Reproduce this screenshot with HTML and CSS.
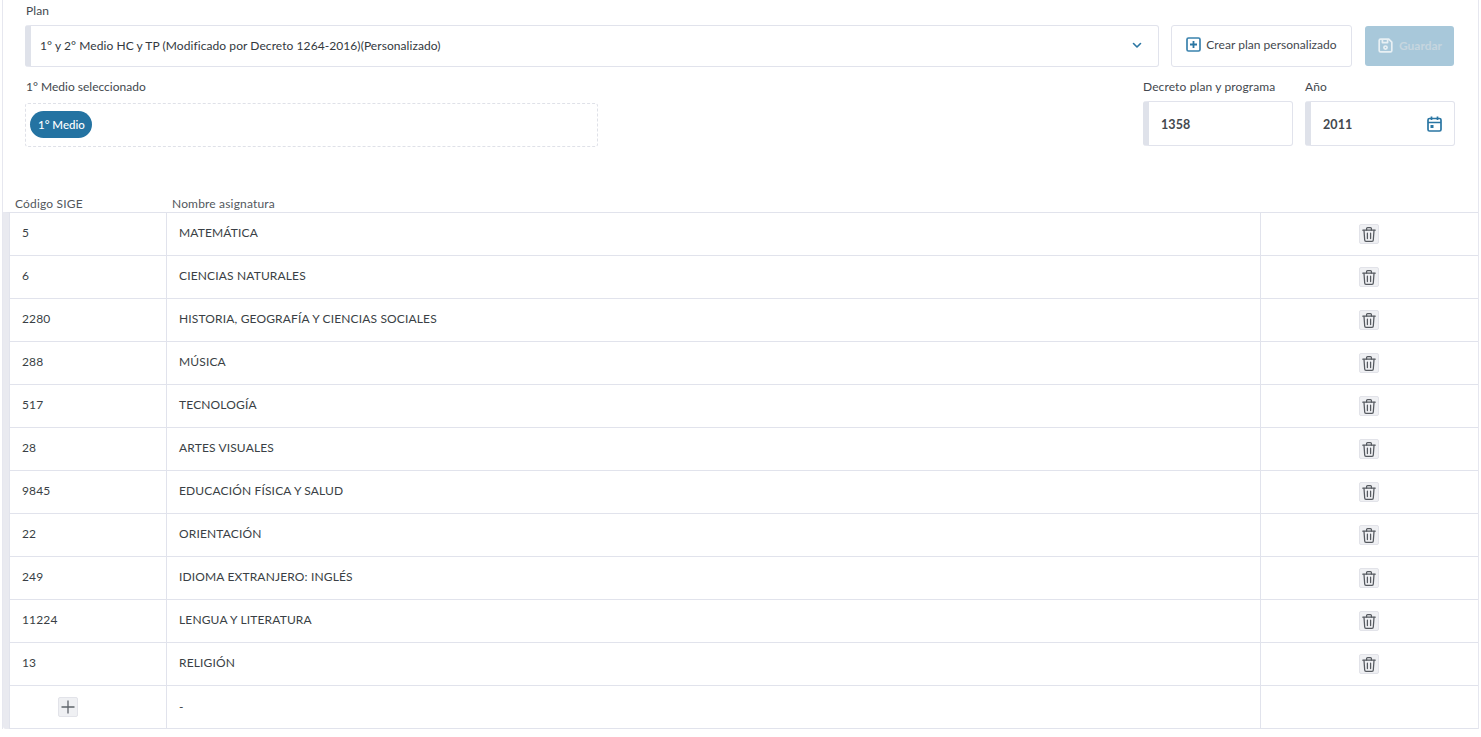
FILE: index.html
```html
<!DOCTYPE html>
<html lang="es">
<head>
<meta charset="utf-8">
<title>Plan</title>
<link rel="stylesheet" href="styles.css">
</head>
<body>
<main class="page">
  <section class="top">
    <label class="label plan-label">Plan</label>
    <div class="plan-row">
      <div class="field select">
        <span class="value">1° y 2° Medio HC y TP (Modificado por Decreto 1264-2016)(Personalizado)</span>
        <svg class="chev" width="12" height="12" viewBox="0 0 12 12" fill="none" stroke="#2a76a3" stroke-width="1.6" stroke-linecap="round" stroke-linejoin="round"><path d="M2.5 4.5 6 8l3.5-3.5"/></svg>
      </div>
      <button class="btn btn-outline">
        <svg width="15" height="15" viewBox="0 0 15 15" fill="none" stroke="#3a82ad" stroke-width="1.7"><rect x="1" y="1" width="13" height="13" rx="1.5"/><path d="M7.5 4v7M4 7.5h7" stroke="#2a76a3" stroke-width="1.8"/></svg>
        <span>Crear plan personalizado</span>
      </button>
      <button class="btn btn-save">
        <svg width="15" height="15" viewBox="0 0 15 15" fill="none" stroke="#e8f0f4" stroke-width="1.7" stroke-linejoin="round"><path d="M1.2 2.6c0-.8.6-1.4 1.4-1.4h8.2l3 3v8.2c0 .8-.6 1.4-1.4 1.4H2.6c-.8 0-1.4-.6-1.4-1.4z"/><path d="M4.4 1.4v3.2h5.2V1.4"/><circle cx="7.5" cy="9.6" r="1.6"/></svg>
        <span>Guardar</span>
      </button>
    </div>
    <div class="second-row">
      <div class="levels">
        <label class="label">1° Medio seleccionado</label>
        <div class="dropzone"><span class="chip">1° Medio</span></div>
      </div>
      <div class="small-col decree">
        <label class="label">Decreto plan y programa</label>
        <div class="field small"><span class="value">1358</span></div>
      </div>
      <div class="small-col">
        <label class="label">Año</label>
        <div class="field small">
          <span class="value">2011</span>
          <svg class="cal" width="15" height="16" viewBox="0 0 15 16" fill="none" stroke="#2a76a3" stroke-width="1.7"><rect x="1" y="2.5" width="13" height="12.5" rx="1.5"/><path d="M1 6.5h13M4.5.5v3.5M10.5.5v3.5"/><rect x="3.5" y="9" width="3" height="3" fill="#2a76a3" stroke="none"/></svg>
        </div>
      </div>
    </div>
  </section>

  <section class="table">
    <div class="thead">
      <span class="th-code">Código SIGE</span>
      <span class="th-name">Nombre asignatura</span>
    </div>
    <div class="tbody">
      <div class="row"><div class="cell code">5</div><div class="cell name">MATEMÁTICA</div><div class="cell act"><button class="icon-btn"><svg class="trash" viewBox="0 0 14 15"><use href="#trash"/></svg></button></div></div>
      <div class="row"><div class="cell code">6</div><div class="cell name">CIENCIAS NATURALES</div><div class="cell act"><button class="icon-btn"><svg class="trash" viewBox="0 0 14 15"><use href="#trash"/></svg></button></div></div>
      <div class="row"><div class="cell code">2280</div><div class="cell name">HISTORIA, GEOGRAFÍA Y CIENCIAS SOCIALES</div><div class="cell act"><button class="icon-btn"><svg class="trash" viewBox="0 0 14 15"><use href="#trash"/></svg></button></div></div>
      <div class="row"><div class="cell code">288</div><div class="cell name">MÚSICA</div><div class="cell act"><button class="icon-btn"><svg class="trash" viewBox="0 0 14 15"><use href="#trash"/></svg></button></div></div>
      <div class="row"><div class="cell code">517</div><div class="cell name">TECNOLOGÍA</div><div class="cell act"><button class="icon-btn"><svg class="trash" viewBox="0 0 14 15"><use href="#trash"/></svg></button></div></div>
      <div class="row"><div class="cell code">28</div><div class="cell name">ARTES VISUALES</div><div class="cell act"><button class="icon-btn"><svg class="trash" viewBox="0 0 14 15"><use href="#trash"/></svg></button></div></div>
      <div class="row"><div class="cell code">9845</div><div class="cell name">EDUCACIÓN FÍSICA Y SALUD</div><div class="cell act"><button class="icon-btn"><svg class="trash" viewBox="0 0 14 15"><use href="#trash"/></svg></button></div></div>
      <div class="row"><div class="cell code">22</div><div class="cell name">ORIENTACIÓN</div><div class="cell act"><button class="icon-btn"><svg class="trash" viewBox="0 0 14 15"><use href="#trash"/></svg></button></div></div>
      <div class="row"><div class="cell code">249</div><div class="cell name">IDIOMA EXTRANJERO: INGLÉS</div><div class="cell act"><button class="icon-btn"><svg class="trash" viewBox="0 0 14 15"><use href="#trash"/></svg></button></div></div>
      <div class="row"><div class="cell code">11224</div><div class="cell name">LENGUA Y LITERATURA</div><div class="cell act"><button class="icon-btn"><svg class="trash" viewBox="0 0 14 15"><use href="#trash"/></svg></button></div></div>
      <div class="row"><div class="cell code">13</div><div class="cell name">RELIGIÓN</div><div class="cell act"><button class="icon-btn"><svg class="trash" viewBox="0 0 14 15"><use href="#trash"/></svg></button></div></div>
      <div class="row"><div class="cell add"><button class="icon-btn"><svg width="14" height="14" viewBox="0 0 14 14" fill="none" stroke="#5f646b" stroke-width="1.3"><path d="M7 .5v13M.5 7h13"/></svg></button></div><div class="cell name dash">-</div><div class="cell act"></div></div>
    </div>
  </section>
</main>
<svg class="defs" width="0" height="0" aria-hidden="true">
  <symbol id="trash" viewBox="0 0 14 15">
    <g fill="none" stroke="#565a60" stroke-width="1.25" stroke-linecap="round" stroke-linejoin="round">
      <path d="M.8 3.2h12.4"/>
      <path d="M4.6 3V1.6c0-.5.4-.9.9-.9h3c.5 0 .9.4.9.9V3"/>
      <path d="M2 3.4l.7 9.6c0 .7.6 1.3 1.3 1.3h6c.7 0 1.3-.6 1.3-1.3l.7-9.6"/>
      <path d="M5.4 6.2v5.4M8.6 6.2v5.4"/>
    </g>
  </symbol>
</svg>
</body>
</html>
```
FILE: styles.css
```css
* { box-sizing: border-box; }
html, body { margin: 0; padding: 0; background: #fff; }
body {
  font-family: "Lato", "Open Sans", sans-serif;
  font-size: 12px;
  color: #3a3f45;
  height: 737px;
  overflow: hidden;
}
.page {
  margin-left: 2px;
  margin-right: 2px;
  height: 729px;
  border-left: 1px solid #e6e7ef;
  border-right: 1px solid #e6e7ef;
}
.top { padding: 0 23px 0 22px; height: 198px; }
.label { display: block; font-size: 12px; line-height: 15px; color: #43484e; letter-spacing: 0.12px; }
.plan-label { padding-left: 1px; padding-top: 3px; height: 25px; }
.plan-row { display: flex; align-items: stretch; height: 42px; }
.field {
  display: flex;
  align-items: center;
  background: #fff;
  border: 1px solid #e1e3ec;
  border-left: 6px solid #dfe2ea;
  border-radius: 3px;
  color: #33383e;
}
.select { flex: 1; padding: 0 15px 2px 9px; justify-content: space-between; }
.value { font-size: 12px; letter-spacing: 0.07px; }
.btn {
  font-family: inherit;
  font-size: 12px;
  display: flex;
  align-items: center;
  justify-content: center;
  border-radius: 3px;
  cursor: pointer;
}
.btn-outline {
  width: 181px;
  margin-left: 12px;
  gap: 5px;
  background: #fff;
  border: 1px solid #e1e3ec;
  color: #43484e;
  padding: 0 0 4px;
  letter-spacing: 0.03px;
}
.btn-save {
  width: 89px;
  margin: 1px 1px 1px 13px;
  gap: 6px;
  background: #a8c8da;
  border: 0;
  color: #c6d6df;
  font-weight: 700;
  padding: 0 0 2px 1px;
}
.second-row { display: flex; margin-top: 12px; }
.levels { width: 573px; margin-right: auto; }
.levels .label { padding-left: 1px; letter-spacing: 0; }
.dropzone {
  margin-top: 9px;
  height: 44px;
  border: 1px dashed #dfe1e8;
  border-radius: 3px;
  padding: 7px 4px;
}
.chip {
  display: inline-flex;
  align-items: center;
  height: 27px;
  padding: 0 7px 0 8px;
  background: #2473a2;
  color: #fff;
  border-radius: 13.5px;
  font-size: 11.5px;
  font-weight: 500;
}
.small-col { width: 150px; }
.decree { margin-right: 12px; }
.small { height: 45px; margin-top: 7px; padding: 1px 12px 0; justify-content: space-between; }
.small-col .label { height: 15px; }
.small-col .value { font-size: 12.5px; font-weight: 700; color: #43484e; }
.table { display: block; margin: 0; }
.thead {
  display: grid;
  grid-template-columns: 169px 1fr;
  height: 14px;
  font-size: 12px;
  line-height: 11px;
  letter-spacing: 0.17px;
  color: #52575d;
}
.th-code { padding-left: 12px; }
.tbody {
  border-left: 6px solid #e9eaf0;
  border-top: 1px solid #e1e3ec;
  border-radius: 0 0 0 3px;
}
.row {
  display: grid;
  grid-template-columns: 157px 1094px 1fr;
  height: 43px;
  border-bottom: 1px solid #e1e3ec;
}
.cell {
  display: flex;
  align-items: center;
  font-size: 12px;
  border-left: 1px solid #e1e3ec;
  color: #3a3f45;
  padding-bottom: 4px;
  letter-spacing: 0.15px;
}
.code { padding-left: 12px; }
.name { padding-left: 12px; }
.dash { padding-bottom: 2px; }
.act, .add { justify-content: center; padding-bottom: 0; }
.add { padding-left: 0; padding-right: 41px; }
.act { padding-right: 2px; }
.icon-btn {
  width: 20px;
  height: 20px;
  padding: 0;
  display: flex;
  align-items: center;
  justify-content: center;
  background: #eff0f3;
  border: 1px solid #e2e3e9;
  border-radius: 2px;
  cursor: pointer;
}
.trash { width: 14px; height: 15px; }
.defs { position: absolute; }
```
